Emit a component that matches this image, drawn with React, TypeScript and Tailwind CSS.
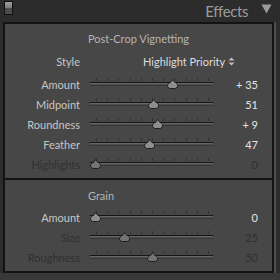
import React from "react";

type Row = { label: string; value: string; pos: number; enabled: boolean; valueOn?: boolean };

const vignette: Row[] = [
  { label: "Amount", value: "+ 35", pos: 83, enabled: true },
  { label: "Midpoint", value: "51", pos: 64, enabled: true },
  { label: "Roundness", value: "+ 9", pos: 68, enabled: true },
  { label: "Feather", value: "47", pos: 60, enabled: true },
  { label: "Highlights", value: "0", pos: 6.5, enabled: false },
];

const grain: Row[] = [
  { label: "Amount", value: "0", pos: 6.5, enabled: true },
  { label: "Size", value: "25", pos: 35.5, enabled: false },
  { label: "Roughness", value: "50", pos: 63, enabled: false },
];

const ticks = [0, 1, 2, 3, 4, 5, 6, 7, 8, 9, 10];

function Thumb({ dim }: { dim: boolean }) {
  return (
    <svg width="11" height="10" viewBox="0 0 11 10" className="block">
      <path
        d="M5.5 0.5 L7.2 3.2 C9.4 4 10.5 5.4 10.5 6.8 C10.5 8.4 9.2 9.5 7.6 9.5 H3.4 C1.8 9.5 0.5 8.4 0.5 6.8 C0.5 5.4 1.6 4 3.8 3.2 Z"
        fill={dim ? "#737373" : "#8e8e8e"}
        stroke="#1c1c1c"
        strokeWidth="1"
      />
      <path d="M5.5 1.8 L6.6 3.7 C8.4 4.3 9.4 5.3 9.5 6.4" fill="none" stroke={dim ? "#858585" : "#a8a8a8"} strokeWidth="0.8" />
    </svg>
  );
}

function Slider({ row }: { row: Row }) {
  const on = row.enabled;
  return (
    <div className="flex h-[20px] items-center">
      <div
        className={`w-[75px] text-right text-[11px] leading-none ${on ? "text-[#c6c6c6]" : "text-[#303030]"}`}
      >
        {row.label}
      </div>
      <div className="relative ml-[9px] h-[20px] w-[125px]">
        {ticks.map((t) => (
          <div
            key={t}
            className="absolute top-[4px] h-[3px] w-px bg-[#333333]"
            style={{ left: 7 + t * 11.2 }}
          />
        ))}
        <div className="absolute left-0 right-0 top-[8px] h-[4px] rounded-full border-t border-[#161616] bg-linear-to-b from-[#727272] to-[#2c2c2c]" />
        <div className="absolute top-[5px]" style={{ left: row.pos - 5.5 }}>
          <Thumb dim={!on} />
        </div>
      </div>
      <div
        className={`w-[44px] text-right text-[11px] leading-none ${on ? "text-[#e4e4e4]" : "text-[#303030]"}`}
      >
        {row.value}
      </div>
    </div>
  );
}

export default function App() {
  return (
    <div className="h-[280px] w-[280px] bg-[#2c2c2c]" style={{ fontFamily: "Lato, 'Liberation Sans', sans-serif" }}>
      <div className="flex h-[22px] items-start">
        <div className="ml-[4px] mt-[1px] flex h-[14px] w-[9px] flex-col border border-[#111111]">
          <div className="h-1/2 bg-linear-to-b from-[#a0a0a0] to-[#7a7a7a]" />
          <div className="h-1/2 bg-[#4c4c4c]" />
        </div>
        <div className="ml-auto mt-[2px] text-[15px] leading-[18px] tracking-[-0.4px] text-[#9c9c9c]">Effects</div>
        <svg width="11" height="10" viewBox="0 0 11 10" className="ml-[13px] mr-[8px] mt-[4px]">
          <path d="M0.5 0.5 H10.5 L5.5 9.5 Z" fill="#9a9a9a" />
        </svg>
      </div>
      <div className="flex">
        <div className="ml-[3px] h-[251px] w-[271px] border-2 border-[#131313] bg-[#474747]">
          <div className="h-[154px] pt-[8px]">
            <div className="h-[14px] text-center text-[11px] leading-[14px] text-[#b4b4b4]">Post-Crop Vignetting</div>
            <div className="mt-[5px] flex h-[20px] items-center text-[11px] leading-none">
              <div className="w-[75px] text-right text-[#c6c6c6]">Style</div>
              <div className="ml-[63px] flex items-center text-[#dcdcdc]">
                Highlight Priority
                <svg width="7" height="9" viewBox="0 0 7 9" className="ml-[3px]">
                  <path d="M0.5 3.5 L3.5 0.5 L6.5 3.5 Z M0.5 5.5 L3.5 8.5 L6.5 5.5 Z" fill="#bdbdbd" />
                </svg>
              </div>
            </div>
            <div className="mt-[3px]">
              {vignette.map((r) => (
                <Slider key={r.label} row={r} />
              ))}
            </div>
          </div>
          <div className="h-[2px] bg-[#131313]" />
          <div className="pt-[9px]">
            <div className="h-[14px] text-[11px] leading-[14px] text-[#b4b4b4]">
              <span className="ml-[83px]">Grain</span>
            </div>
            <div className="mt-[4px]">
              {grain.map((r) => (
                <Slider key={r.label} row={r} />
              ))}
            </div>
          </div>
        </div>
        <div className="h-[251px] w-[2px] bg-[#4e4e4e]" />
      </div>
      <div className="h-[7px] bg-[#383838]" />
    </div>
  );
}
